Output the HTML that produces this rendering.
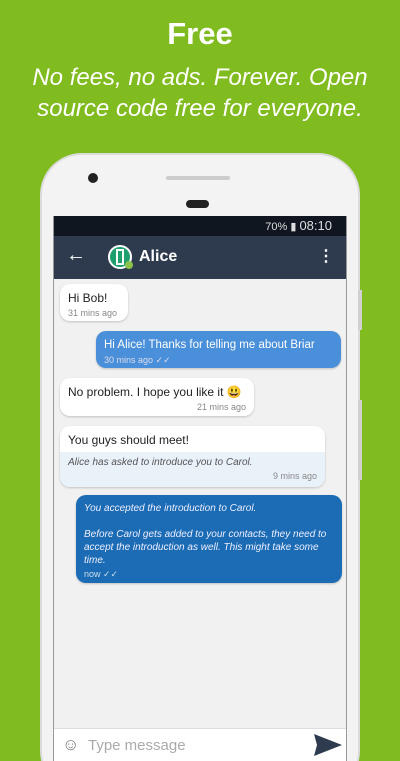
<!DOCTYPE html>
<html style="width:400px;height:761px;overflow:hidden"><head><meta charset="utf-8"><style>
*{margin:0;padding:0;box-sizing:border-box}
body{width:400px;height:761px;overflow:hidden;background:#80bb1f;font-family:"Liberation Sans",sans-serif;position:relative}
.h1{position:absolute;top:16px;width:100%;text-align:center;color:#fff;font-weight:bold;font-size:31px}
.h2{position:absolute;top:62px;width:100%;text-align:center;color:#fff;font-style:italic;font-size:24px;line-height:31px}
.phone{position:absolute;left:40px;top:153px;width:320px;height:640px;background:#f3f3f3;border:2px solid #dcdcdc;border-radius:42px}
.clip{position:absolute;left:0;top:0;width:400px;height:761px;overflow:hidden}
.btn{position:absolute;width:4px;background:#d0d0d0}
.cam{position:absolute;left:88px;top:173px;width:10px;height:10px;border-radius:50%;background:#222}
.spk{position:absolute;left:166px;top:176px;width:64px;height:4px;border-radius:2px;background:#ccc}
.ear{position:absolute;left:186px;top:200px;width:23px;height:8px;border-radius:4px;background:#222}
.screen{position:absolute;left:53px;top:216px;width:294px;height:545px;background:#f1f1f1;border-left:1px solid #999;border-right:1px solid #999}
.sb{height:20px;background:#0f1620;color:#ddd;font-size:11px;text-align:right;padding-right:14px;line-height:20px}
.tb{height:43px;background:#2e3b4e;position:relative;color:#fff}
.b{position:absolute;background:#fff;border-radius:10px;box-shadow:0 1px 2px rgba(0,0,0,.2);font-size:12px;color:#222;padding:7px 8px;white-space:nowrap;line-height:15px}
.t{font-size:9px;color:#888;margin-top:2px;line-height:11px}
.inp{position:absolute;left:0;right:0;bottom:0;height:33px;background:#fff;border-top:1px solid #ddd}
</style></head><body>
<div class="clip">
<div class="h1">Free</div>
<div class="h2">No fees, no ads. Forever. Open<br>source code free for everyone.</div>
<div class="phone"></div>
<div class="btn" style="left:358px;top:290px;height:40px"></div>
<div class="btn" style="left:358px;top:400px;height:80px"></div>
<div class="cam"></div><div class="spk"></div><div class="ear"></div>
<div class="screen">
<div class="sb">70% ▮ <span style="font-size:13px">08:10</span></div>
<div class="tb">
<span style="position:absolute;left:12px;top:8px;font-size:20px">←</span>
<div style="position:absolute;left:54px;top:9px;width:24px;height:24px;border-radius:50%;background:#1f9e6e;border:2px solid #fff"></div>
<div style="position:absolute;left:62px;top:13px;width:8px;height:16px;border:2px solid #fff"></div>
<div style="position:absolute;left:71px;top:25px;width:8px;height:8px;border-radius:50%;background:#8bc34a"></div>
<span style="position:absolute;left:85px;top:12px;font-size:16px;font-weight:bold">Alice</span>
<span style="position:absolute;right:12px;top:10px;font-size:16px;font-weight:bold">⋮</span>
</div>
<div class="b" style="left:6px;top:68px;width:68px;height:37px">Hi Bob!<div class="t">31 mins ago</div></div>
<div class="b" style="left:42px;top:115px;width:245px;height:37px;background:#4a8fd9;color:#fff;font-size:11.5px">Hi Alice! Thanks for telling me about Briar<div class="t" style="color:#dde">30 mins ago ✓✓</div></div>
<div class="b" style="left:6px;top:162px;width:194px;height:38px">No problem. I hope you like it 😃<div class="t" style="text-align:right">21 mins ago</div></div>
<div class="b" style="left:6px;top:210px;width:265px;height:61px;padding:0;overflow:hidden"><div style="padding:7px 8px;height:26px">You guys should meet!</div><div style="background:#e9f1f9;height:35px;padding:4px 8px;font-size:10px;font-style:italic;color:#555;line-height:13px">Alice has asked to introduce you to Carol.<div class="t" style="text-align:right;font-style:normal">9 mins ago</div></div></div>
<div class="b" style="left:22px;top:279px;width:266px;height:88px;background:#1b6cb5;color:#eef;font-size:10px;font-style:italic;line-height:13px;white-space:normal">You accepted the introduction to Carol.<br><br>Before Carol gets added to your contacts, they need to accept the introduction as well. This might take some time.<div class="t" style="color:#cde;font-style:normal">now ✓✓</div></div>
<div class="inp"><span style="position:absolute;left:8px;top:6px;font-size:17px;color:#777">☺</span><span style="position:absolute;left:34px;top:8px;font-size:15px;color:#aaa">Type message</span>
<svg style="position:absolute;right:4px;top:5px" width="28" height="22" viewBox="0 0 28 22"><path d="M0 0L28 11L0 22L3 11Z" fill="#2e3b4e"/></svg></div>
</div>
</div>
</body></html>
